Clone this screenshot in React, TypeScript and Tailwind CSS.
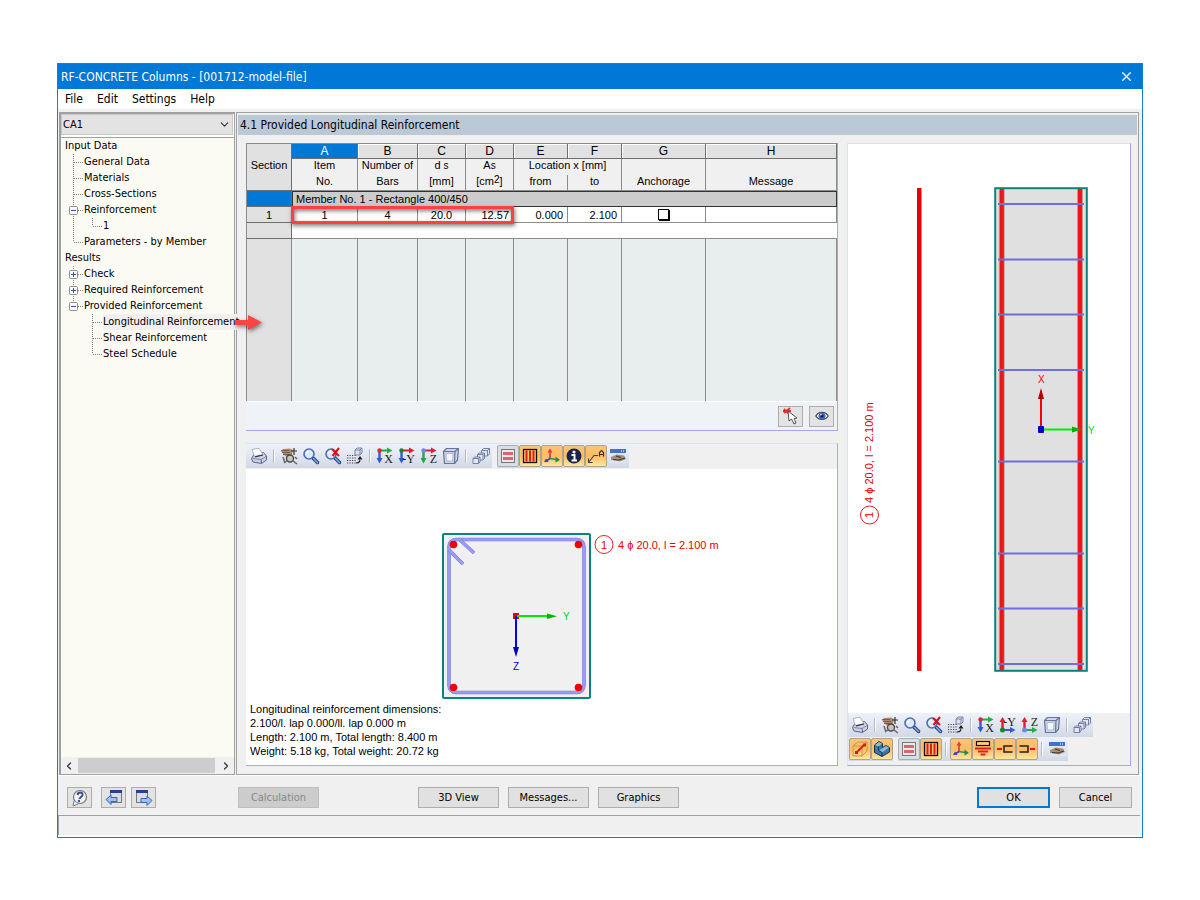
import React from "react";
import { X, ChevronDown, ChevronLeft, ChevronRight } from "lucide-react";

type Guide = "blank" | "line" | "tee" | "end" | "minus" | "plus" | "minusLast";

function TreeGuide({ kind }: { kind: Guide }) {
  const boxed = kind === "minus" || kind === "plus" || kind === "minusLast";
  const down = kind === "line" || kind === "tee" || kind === "minus" || kind === "plus";
  return (
    <svg width="19" height="16" viewBox="0 0 19 16" className="shrink-0" aria-hidden="true">
      {kind !== "blank" && (
        <path d={down ? "M8.5 0V16" : "M8.5 0V8"} stroke="#808080" strokeDasharray="1 1" fill="none" />
      )}
      {kind !== "blank" && kind !== "line" && (
        <path d="M9 8.5H18" stroke="#808080" strokeDasharray="1 1" fill="none" />
      )}
      {boxed && (
        <>
          <rect x="4.5" y="4.5" width="8" height="8" rx="1" fill="#f8f8f8" stroke="#8e8e8e" />
          <path d={kind === "plus" ? "M6 8.5H11M8.5 6V11" : "M6 8.5H11"} stroke="#3a55a0" fill="none" />
        </>
      )}
    </svg>
  );
}

const TREE: { label: string; guides: Guide[]; selected?: boolean }[] = [
  { label: "Input Data", guides: [] },
  { label: "General Data", guides: ["tee"] },
  { label: "Materials", guides: ["tee"] },
  { label: "Cross-Sections", guides: ["tee"] },
  { label: "Reinforcement", guides: ["minus"] },
  { label: "1", guides: ["line", "end"] },
  { label: "Parameters - by Member", guides: ["end"] },
  { label: "Results", guides: [] },
  { label: "Check", guides: ["plus"] },
  { label: "Required Reinforcement", guides: ["plus"] },
  { label: "Provided Reinforcement", guides: ["minusLast"] },
  { label: "Longitudinal Reinforcement", guides: ["blank", "tee"], selected: true },
  { label: "Shear Reinforcement", guides: ["blank", "tee"] },
  { label: "Steel Schedule", guides: ["blank", "end"] },
];

function Ico({ children, size = 18 }: { children: React.ReactNode; size?: number }) {
  return (
    <svg width={size} height={size} viewBox="0 0 18 18" fill="none" className="shrink-0" aria-hidden="true">
      {children}
    </svg>
  );
}

const PrinterIcon = () => (
  <Ico>
    <path d="M1.500 11.500 4 7.500 13.500 5.500 16.500 9V13L11.500 16.500 3 15Z" fill="#cdd2e4" stroke="#5d6585" />
    <path d="M2.500 11.500 11 12.500 16 9.500" stroke="#8189a8" />
    <path d="M11 12.500 11.500 16" stroke="#5d6585" />
    <path d="M4.500 9.500 2 2.500 9 1.300 13 7.500Z" fill="#fff" stroke="#9a9fae" strokeWidth=".8" />
    <path d="M5 9.800 13 8" stroke="#2e3450" strokeWidth="1.200" />
  </Ico>
);

const PanIcon = () => (
  <Ico>
    <path d="M1 4 3 2 10 1.500 13 3 12 8 7 10 4 8Z" fill="#b08a6c" />
    <path d="M1 3.500H9M2 5.500H10M3 7.500H9" stroke="#6b5140" strokeWidth=".8" />
    <path d="M14 1V8M11 4H17" stroke="#333" strokeWidth="1.200" />
    <circle cx="10" cy="11.500" r="3.500" fill="#c7c3bd" stroke="#444" strokeWidth="1.300" />
    <path d="M3 10 5 16M4 16 8 13M13 14 17 17M15 10 17 12" stroke="#666" strokeWidth="1.500" />
  </Ico>
);

const ZoomShape = () => (
  <>
    <path d="M11 11 15.500 15.500" stroke="#27407e" strokeWidth="3.500" strokeLinecap="round" />
    <path d="M11.500 11.500 15.500 15.500" stroke="#8fb3ee" strokeWidth="1.300" strokeLinecap="round" />
    <circle cx="7" cy="7" r="5" fill="#dce9fb" stroke="#4a6bb4" strokeWidth="1.600" />
    <path d="M4.500 7A2.500 2.500 0 0 1 7 4.500" stroke="#fff" strokeWidth="1.300" />
  </>
);
const ZoomIcon = () => (
  <Ico>
    <ZoomShape />
  </Ico>
);
const ZoomResetIcon = () => (
  <Ico>
    <ZoomShape />
    <path d="M8 2 15 9M15 1 8.500 9" stroke="#d41414" strokeWidth="2" />
  </Ico>
);

const GridCubeIcon = () => (
  <Ico>
    {[8.5, 11, 13.5, 16].map((y) => (
      <path key={y} d={`M1 ${y}H10`} stroke="#444" strokeWidth="1.200" strokeDasharray="1.200 1.300" />
    ))}
    <path d="M9 3 11 1H16V6L14 8H9ZM9 3H14V8M14 3 16 1" stroke="#7c86a8" fill="#dbe1f0" />
    <path d="M10 16C14 16 14 14 14 11M12 12.500 14 10 16 12.500" stroke="#222" strokeWidth="1.200" />
  </Ico>
);

function AxisIcon({ letter, across, down, hub }: { letter: string; across: string; down: string; hub: string }) {
  return (
    <Ico>
      <path d="M3 3.500H12" stroke={across} strokeWidth="2" />
      <path d="M11 .5 16.500 3.500 11 6.500Z" fill={across} />
      <path d="M3.500 4V12" stroke={down} strokeWidth="2.400" />
      <path d="M.5 11 3.500 16.500 6.500 11Z" fill={down} />
      <circle cx="3.500" cy="3.500" r="2.200" fill={hub} />
      <text x="17" y="16" textAnchor="end" fontSize="12" fontFamily="Liberation Serif, serif" fill="#222">
        {letter}
      </text>
    </Ico>
  );
}
const AxisX = () => <AxisIcon letter="X" across="#25ad40" down="#3657d8" hub="#e6252b" />;
const AxisY = () => <AxisIcon letter="-Y" across="#d92038" down="#3657d8" hub="#16852d" />;
const AxisZ = () => <AxisIcon letter="Z" across="#d92038" down="#25a53a" hub="#7088e8" />;

function UpAxisIcon({ letter, bottom, up, hub }: { letter: string; bottom: string; up: string; hub: string }) {
  return (
    <Ico>
      <path d="M3.500 14H12" stroke={bottom} strokeWidth="2" />
      <path d="M11 11 16.500 14 11 17Z" fill={bottom} />
      <path d="M3.500 14V5" stroke={up} strokeWidth="2.400" />
      <path d="M.5 6 3.500 1 6.500 6Z" fill={up} />
      <circle cx="3.500" cy="14" r="2.500" fill={hub} />
      <text x="17" y="9.500" textAnchor="end" fontSize="12" fontFamily="Liberation Serif, serif" fill="#222">
        {letter}
      </text>
    </Ico>
  );
}
const UpAxisY = () => <UpAxisIcon letter="-Y" bottom="#3657d8" up="#d92038" hub="#16852d" />;
const UpAxisZ = () => <UpAxisIcon letter="Z" bottom="#25ad40" up="#d92038" hub="#7088e8" />;

const CubeIcon = () => (
  <Ico>
    <path
      d="M1.500 4.500 4.500 1.500H16.500L15.500 13 12.500 16.500H2.500Z"
      fill="#cdd5e8"
      stroke="#66749a"
      strokeWidth="1.200"
      strokeLinejoin="round"
    />
    <path d="M1.500 4.500H13L12.500 16.500M13 4.500 16.500 1.500" stroke="#66749a" strokeWidth="1.200" />
    <path d="M4 6.500H11L10.500 14H4.500Z" fill="#f4f6fb" stroke="#a3aecb" strokeWidth=".8" />
  </Ico>
);

const CubesIcon = () => (
  <Ico>
    <g fill="#e2e7f2" stroke="#68749a" strokeWidth=".9" strokeLinejoin="round">
      <path d="M9.500 3.500 11.500 1.500H17.500V7L15.500 9H9.500Z" />
      <path d="M9.500 3.500H15.500V9M15.500 3.500 17.500 1.500" />
      <path d="M5.500 7.500 7 6H12.500V11.500L11 13H5.500Z" />
      <path d="M5.500 7.500H11V13M11 7.500 12.500 6" />
      <path d="M1 11.500 2.500 10H8V15L6.500 16.500H1Z" />
      <path d="M1 11.500H6.500V16.500M6.500 11.500 8 10" />
    </g>
  </Ico>
);

const StirrupsIcon = () => (
  <Ico>
    <rect x="2.500" y="2.500" width="13" height="13" fill="#e9e9e9" stroke="#777" />
    <rect x="4" y="5" width="10" height="3" fill="#dc6670" />
    <rect x="4" y="10" width="10" height="3" fill="#dc6670" />
  </Ico>
);
const BarsIcon = () => (
  <Ico>
    <rect x="2.500" y="2.500" width="13" height="13" fill="#ffc766" stroke="#111" strokeWidth="1.300" />
    <path d="M5.500 3.500V14.500M9 3.500V14.500M12.500 3.500V14.500" stroke="#e01a1a" strokeWidth="2" />
  </Ico>
);
const AxesIcon = () => (
  <Ico>
    <path d="M7 12V4" stroke="#d33434" strokeWidth="1.500" />
    <path d="M4.500 5.500 7 1.500 9.500 5.500Z" fill="#e23a3a" />
    <path d="M7 11.500 13 12.500" stroke="#2f8f57" strokeWidth="1.500" />
    <path d="M12.500 9.500 17 13 12.500 15.500Z" fill="#20894b" />
    <path d="M7 11.500 3 14" stroke="#3b3fc0" strokeWidth="1.500" />
    <path d="M1 15 3 11.500 5.500 15Z" fill="#3b3fc0" />
  </Ico>
);
const InfoIcon = () => (
  <Ico>
    <circle cx="9" cy="9" r="7.500" fill="#16244e" />
    <circle cx="9" cy="5" r="1.600" fill="#fff" />
    <path d="M6.500 8H9.500V13M6.500 13.500H12" stroke="#fff" strokeWidth="2" />
  </Ico>
);
const LabelIcon = () => (
  <Ico>
    <path d="M1.500 15.500 7 8.500H11M1.500 11.500V15.500H5.500" stroke="#444" strokeWidth="1.200" />
    <path d="M12.500 9.500V5.500L14.500 3.500 16.500 5.500V9.500M12.500 7.500H16.500" stroke="#333" strokeWidth="1.200" />
  </Ico>
);
const SettingsIcon = () => (
  <Ico>
    <rect x="1" y="2" width="16" height="14" fill="#dce6f5" />
    <rect x="1" y="2" width="16" height="4" fill="#3d74c9" />
    <path d="M12 4H16" stroke="#fff" strokeDasharray="1 1" />
    <path d="M2 10 8 7.500 15 8.500 17 12 11 14.500 6 13.500 2 13Z" fill="#a98d78" />
    <path d="M4 12.500 10 13 16 11M7 9 12 10.500" stroke="#3f3731" strokeWidth="1.200" />
  </Ico>
);
const WireBoxIcon = () => (
  <Ico>
    <path d="M2 6 7 2H16V11L11 16H2ZM2 6H11V16M11 6 16 2" stroke="#d09240" />
    <path d="M6 12 13 5" stroke="#d31d1d" strokeWidth="1.800" />
    <rect x="4" y="11" width="3" height="3" fill="#d31d1d" />
    <rect x="12" y="3.500" width="3" height="3" fill="#d31d1d" />
  </Ico>
);
const SolidIcon = () => (
  <Ico>
    <path d="M1.500 5 6 1.500 9.500 3.500V7.500L13 5.500 16.500 7.500V12L9 16.500 1.500 12.500Z" fill="#3c78a8" stroke="#17344e" />
    <path d="M2 5 6 2 9 3.500 5.500 6.500ZM6 10.500 13 6 16 7.500 9 12.500Z" fill="#8fbadd" />
    <path d="M9 12.500V16.500M5.500 6.500V10.500L9 12.500" stroke="#17344e" />
  </Ico>
);
const SupportIcon = () => (
  <Ico>
    <rect x="2.500" y="1.500" width="13" height="4" fill="#ffd27a" stroke="#111" strokeWidth="1.200" />
    <path d="M1 8.500H17M4 11.500H14M6.500 14.500H11.500" stroke="#d82020" strokeWidth="2" />
  </Ico>
);
const LeftHookIcon = () => (
  <Ico>
    <path d="M1 9H6" stroke="#e01a1a" strokeWidth="2" />
    <path d="M16.500 6H8V12H16.500" stroke="#222" strokeWidth="1.500" />
  </Ico>
);
const RightHookIcon = () => (
  <Ico>
    <path d="M12 9H17" stroke="#e01a1a" strokeWidth="2" />
    <path d="M1.500 6H10V12H1.500" stroke="#222" strokeWidth="1.500" />
  </Ico>
);

type Tool = { name: string; icon: () => React.ReactElement; state?: "on" | "off" };

function ToolGroup({ sets }: { sets: Tool[][] }) {
  return (
    <div className="flex h-6 items-center bg-linear-to-b from-[#eef2fa] to-[#d2d9e6]">
      {sets.map((set, i) => (
        <React.Fragment key={i}>
          {i > 0 && <span className="mx-[3px] h-3.5 w-0.5 border-r border-white bg-[#b4b8c0]" />}
          {set.map(({ name, icon: Icon, state }) => (
            <button
              key={name}
              type="button"
              title={name}
              aria-label={name}
              className={
                state === "on"
                  ? "flex size-[22px] items-center justify-center rounded-xs border border-[#a9a58f] bg-linear-to-b from-[#ffc479] via-[#ffbb61] to-[#ffe69c]"
                  : state === "off"
                    ? "flex size-[22px] items-center justify-center rounded-xs border border-[#a4b0b8] bg-[#d9dee4]"
                    : "flex size-[22px] items-center justify-center"
              }
            >
              <Icon />
            </button>
          ))}
        </React.Fragment>
      ))}
    </div>
  );
}

const BASE_TOOLS: Tool[][] = [
  [{ name: "Print", icon: PrinterIcon }],
  [
    { name: "Pan", icon: PanIcon },
    { name: "Zoom window", icon: ZoomIcon },
    { name: "Show all", icon: ZoomResetIcon },
    { name: "Previous view", icon: GridCubeIcon },
  ],
];
const COPY_TOOL: Tool[] = [{ name: "Copy", icon: CubesIcon }];

const SECTION_VIEW: Tool[][] = [
  ...BASE_TOOLS,
  [
    { name: "View in X", icon: AxisX },
    { name: "View in -Y", icon: AxisY },
    { name: "View in Z", icon: AxisZ },
    { name: "Isometric", icon: CubeIcon },
  ],
  COPY_TOOL,
];
const SECTION_DISPLAY: Tool[][] = [
  [
    { name: "Stirrups", icon: StirrupsIcon, state: "off" },
    { name: "Longitudinal bars", icon: BarsIcon, state: "on" },
    { name: "Axes", icon: AxesIcon, state: "on" },
    { name: "Information", icon: InfoIcon, state: "on" },
    { name: "Labels", icon: LabelIcon, state: "on" },
    { name: "Settings", icon: SettingsIcon },
  ],
];
const MEMBER_VIEW: Tool[][] = [
  ...BASE_TOOLS,
  [
    { name: "View in X", icon: AxisX },
    { name: "View in -Y", icon: UpAxisY },
    { name: "View in Z", icon: UpAxisZ },
    { name: "Isometric", icon: CubeIcon },
  ],
  COPY_TOOL,
];
const MEMBER_MODEL: Tool[][] = [
  [
    { name: "Wireframe", icon: WireBoxIcon, state: "on" },
    { name: "Solid", icon: SolidIcon, state: "on" },
  ],
];
const MEMBER_DISPLAY: Tool[][] = [
  [
    { name: "Stirrups", icon: StirrupsIcon, state: "off" },
    { name: "Longitudinal bars", icon: BarsIcon, state: "on" },
  ],
  [
    { name: "Axes", icon: AxesIcon, state: "on" },
    { name: "Supports", icon: SupportIcon, state: "on" },
    { name: "Left anchorage", icon: LeftHookIcon, state: "on" },
    { name: "Right anchorage", icon: RightHookIcon, state: "on" },
  ],
  [{ name: "Settings", icon: SettingsIcon }],
];

const LETTERS = ["A", "B", "C", "D", "E", "F", "G", "H"];
const UNITS: React.ReactNode[] = [
  "No.",
  "Bars",
  "[mm]",
  <>
    [cm<span className="align-[2px] text-[10px] leading-none">2</span>]
  </>,
  "from",
  "to",
  "Anchorage",
  "Message",
];

function ReinforcementTable() {
  const head = "border-r border-[#8c8c8c] p-0 text-center align-top leading-3 font-normal";
  const side = "border-r border-b border-[#6e6e6e] bg-[#e1e1e1] p-0 text-center font-normal";
  const cell = "border-r border-b border-[#8c8c8c] bg-white p-0";
  return (
    <div className="relative">
      <table className="w-full table-fixed border-separate border-spacing-0 border-t border-l border-[#8c8c8c] font-['Liberation_Sans',sans-serif] text-[11px] leading-[14px]">
        <colgroup>
          <col className="w-[45px]" />
          <col className="w-[66px]" />
          <col className="w-[60px]" />
          <col className="w-12" />
          <col className="w-12" />
          <col className="w-[54px]" />
          <col className="w-[54px]" />
          <col className="w-[84px]" />
          <col />
        </colgroup>
        <thead className="bg-[#f0f0f0]">
          <tr>
            <th
              rowSpan={3}
              scope="col"
              className="border-r border-b border-[#6e6e6e] bg-[#e1e1e1] p-0 pt-3.5 text-center align-top font-normal"
            >
              Section
            </th>
            {LETTERS.map((l) => (
              <th
                key={l}
                className={
                  l === "A"
                    ? "h-[15px] border-r border-b border-[#6e6e6e] bg-[#0078d7] p-0 text-center text-xs leading-[14px] font-normal text-white"
                    : "h-[15px] border-r border-b border-[#6e6e6e] bg-[#e1e1e1] p-0 text-center text-xs leading-[14px] font-normal shadow-[inset_1px_1px_0_#fff]"
                }
              >
                {l}
              </th>
            ))}
          </tr>
          <tr className="h-4">
            <th className={head}>Item</th>
            <th className={head}>Number of</th>
            <th className={head}>
              d <span className="text-[10px] leading-none">s</span>
            </th>
            <th className={head}>
              A<span className="text-[10px] leading-none">s</span>
            </th>
            <th colSpan={2} className={head}>
              Location x [mm]
            </th>
            <th className={head} />
            <th className={head} />
          </tr>
          <tr className="h-4">
            {UNITS.map((t, i) => (
              <th
                key={i}
                className="h-4 border-r border-b border-[#8c8c8c] p-0 text-center align-top leading-3 font-normal"
              >
                {t}
              </th>
            ))}
          </tr>
        </thead>
        <tbody>
          <tr className="h-4">
            <th className="border-r border-b border-[#6e6e6e] bg-[#0078d7] p-0" />
            <td colSpan={8} className="border border-[#333] bg-[#ccc] p-0 pl-[3px] whitespace-nowrap">
              Member No. 1 - Rectangle 400/450
            </td>
          </tr>
          <tr className="h-4">
            <th scope="row" className={side}>
              1
            </th>
            <td className={`${cell} text-center`}>1</td>
            <td className={`${cell} text-center`}>4</td>
            <td className={`${cell} text-center`}>20.0</td>
            <td className={`${cell} pr-1 text-right`}>12.57</td>
            <td className={`${cell} pr-1 text-right`}>0.000</td>
            <td className={`${cell} pr-1 text-right`}>2.100</td>
            <td className={`${cell} text-center`}>
              <input
                type="checkbox"
                aria-label="Anchorage"
                className="mx-auto block size-[11px] appearance-none border border-black bg-white shadow-[1px_1px_0_#000]"
              />
            </td>
            <td className={cell} />
          </tr>
          <tr className="h-4">
            <th className={side} />
            <td colSpan={8} className="border-b border-[#8c8c8c] bg-white p-0" />
          </tr>
          <tr className="h-[162px]">
            <th className="border-r border-[#8c8c8c] bg-[#e1e1e1] p-0" />
            {LETTERS.map((l) => (
              <td key={l} className="border-r border-[#8c8c8c] bg-[#e8eeee] p-0" />
            ))}
          </tr>
        </tbody>
      </table>
      <div className="pointer-events-none absolute top-[63px] left-[45px] h-[18px] w-[223px] border-3 border-[#fb4141] shadow-[1px_2px_4px_rgba(0,0,0,.5),inset_1px_2px_4px_rgba(0,0,0,.5)]" />
    </div>
  );
}

function SectionDrawing() {
  return (
    <svg viewBox="246 469 591 233" className="h-[233px] w-full font-['Liberation_Sans',sans-serif]" fontSize="11">
      <rect x="443" y="534" width="147" height="164" rx="1" fill="#f0f0f0" stroke="#0b827c" strokeWidth="2" />
      <rect x="449" y="539.500" width="135" height="153" rx="7" fill="none" stroke="#7878c0" strokeWidth="3.500" />
      <rect x="449" y="539.500" width="135" height="153" rx="7" fill="none" stroke="#9a9aff" strokeWidth="2.500" />
      <path d="M449 550 463 564M460 540 474 553" stroke="#7878c0" strokeWidth="3.500" />
      <path d="M449 550 463 564M460 540 474 553" stroke="#9a9aff" strokeWidth="2.500" />
      <g fill="#f50000">
        <circle cx="453.500" cy="544.500" r="3.800" />
        <circle cx="578.500" cy="544.500" r="3.800" />
        <circle cx="453.500" cy="687.500" r="3.800" />
        <circle cx="578.500" cy="687.500" r="3.800" />
      </g>
      <rect x="513" y="613" width="6" height="6" fill="#e00000" />
      <path d="M516 616V649" stroke="#00f" strokeWidth="2" />
      <path d="M513 647H519L516 657Z" fill="#0000c8" />
      <path d="M517 616H548" stroke="#0e0" strokeWidth="2" />
      <path d="M547 613.500V619L557 616.200Z" fill="#00b400" />
      <text x="563" y="620" fontSize="10" fill="#00d800">Y</text>
      <text x="513" y="670" fontSize="10" fill="#00e">Z</text>
      <circle cx="604" cy="544.500" r="9" fill="#fff" stroke="#f01818" />
      <g fill="#e80000">
        <text x="601" y="548.500">1</text>
        <text x="618" y="548.500">4 ϕ 20.0, l = 2.100 m</text>
      </g>
    </svg>
  );
}

function MemberDrawing() {
  return (
    <svg viewBox="848 144 282 569" className="h-[569px] w-full font-['Liberation_Sans',sans-serif]" fontSize="11">
      <rect x="917" y="188" width="4.500" height="483" fill="#e80000" />
      <rect x="995.200" y="188.200" width="91.600" height="482.600" fill="#e0e0e0" stroke="#0b827c" strokeWidth="2" />
      <path d="M1001.800 189V670M1080 189V670" stroke="#c79a9a" strokeWidth="6" />
      <path d="M1001.800 189V670M1080 189V670" stroke="#ee1515" strokeWidth="4" />
      {[204, 259.5, 314.5, 370, 461.5, 553.5, 608.5, 664].map((y) => (
        <path key={y} d={`M998 ${y}H1084`} stroke="#6f6fd8" strokeWidth="2" />
      ))}
      <path d="M1041 429V398" stroke="#f00" strokeWidth="2" />
      <path d="M1038 399H1044L1041 388Z" fill="#b40000" />
      <path d="M1041 429.500H1073" stroke="#0e0" strokeWidth="2" />
      <path d="M1072 426.500V432.500L1082 429.500Z" fill="#00b400" />
      <rect x="1038" y="426" width="6" height="7" rx="1" fill="#0000c8" />
      <text x="1038" y="383" fontSize="10" fill="#f00">X</text>
      <text x="1088" y="433.500" fontSize="10" fill="#0d0">Y</text>
      <circle cx="869.500" cy="515" r="9" fill="#fff" stroke="#f01818" />
      <g fill="#e80000" transform="translate(873 518) rotate(-90)">
        <text x="0" y="0">1</text>
        <text x="15" y="0">4 ϕ 20.0, l = 2.100 m</text>
      </g>
    </svg>
  );
}

const squareButton = "flex h-[21px] w-[25px] items-center justify-center border border-[#adadad] bg-[#e3e3e3]";
const pushButton = "h-[21px] w-[81px] border border-[#adadad] bg-[#e1e1e1] text-center";

export default function App() {
  return (
    <div className="min-h-screen bg-white px-[57px] pt-[63px] font-['DejaVu_Sans_Condensed','DejaVu_Sans',sans-serif] text-[11px] leading-4 text-black">
      <div className="border border-[#0f7fd7] bg-[#f0f0f0]">
        <header className="flex h-[25px] items-center justify-between bg-[#0078d7] pr-2 pl-[3px] text-white">
          <h1 className="text-xs whitespace-nowrap">RF-CONCRETE Columns - [001712-model-file]</h1>
          <button type="button" aria-label="Close">
            <X size={15} strokeWidth={2} />
          </button>
        </header>
        <nav className="flex h-5 items-center bg-white pl-[7px] text-xs">
          <button type="button" className="mr-3.5">File</button>
          <button type="button" className="mr-3.5">Edit</button>
          <button type="button" className="mr-3.5">Settings</button>
          <button type="button">Help</button>
        </nav>

        <div className="mt-[3px] flex gap-px border-b border-white pr-[3px] pl-px">
          <aside className="flex w-[176px] shrink-0 flex-col border-2 border-r border-b border-[#a0a0a0] bg-white">
            <div className="relative mb-0.5 border-r border-white">
              <select
                aria-label="Case"
                className="block h-[21px] w-full appearance-none border border-[#c8c8c8] bg-[#e3e3e3] pl-px text-[11px]"
              >
                <option>CA1</option>
              </select>
              <ChevronDown size={13} className="pointer-events-none absolute top-1 right-0.5 text-[#333]" />
            </div>
            <ul className="grow border-t border-[#a0a0a0] bg-[#fcfbf3]">
              {TREE.map(({ label, guides, selected }) => (
                <li key={label} className="relative flex h-4 items-center pl-1">
                  {guides.map((g, i) => (
                    <TreeGuide key={i} kind={g} />
                  ))}
                  <a href="#" className={selected ? "grow bg-[#f0f0f0] whitespace-nowrap" : "whitespace-nowrap"}>
                    {label}
                  </a>
                  {selected && (
                    <svg
                      width="32"
                      height="24"
                      viewBox="0 0 32 24"
                      className="absolute -top-1 left-[173px] z-10 drop-shadow-[1px_2px_2px_rgba(0,0,0,.5)]"
                      aria-hidden="true"
                    >
                      <path d="M1 10H14V5L28 12.500 14 20V15H1Z" fill="#fb4545" />
                    </svg>
                  )}
                </li>
              ))}
            </ul>
            <div className="flex h-[17px] items-center justify-between bg-[#f0f0f0] px-0.5 text-[#333]">
              <ChevronLeft size={12} strokeWidth={2.5} />
              <div className="mr-[5px] ml-[3px] h-[15px] grow bg-[#cdcdcd]" />
              <ChevronRight size={12} strokeWidth={2.5} />
            </div>
          </aside>

          <main className="min-w-0 grow border border-[#a0a0a0] px-px pt-0.5 pb-2">
            <h2 className="flex h-5 items-center bg-[#bbc9d7] pl-0.5 text-xs">
              4.1 Provided Longitudinal Reinforcement
            </h2>
            <div className="mt-2 flex gap-[9px] pr-1.5 pl-2">
              <div className="flex min-w-0 grow flex-col gap-3">
                <section className="border-r border-b border-[#a6a6ee] bg-[#eff3f8]">
                  <ReinforcementTable />
                  <div className="flex h-[29px] items-center justify-end gap-1.5 border-t border-white pr-[3px]">
                    <button type="button" aria-label="Pick" className={squareButton}>
                      <Ico>
                        <path d="M2 2 8 8M8 1 2 6M1 4H9" stroke="#dc3030" strokeWidth="1.800" />
                        <path d="M6 4 7 14 9.500 12 12 17 14 16 12 11.500 15 11Z" fill="#fff" stroke="#555" />
                      </Ico>
                    </button>
                    <button type="button" aria-label="Show" className={squareButton}>
                      <Ico size={16}>
                        <path d="M2 9C5 3.500 13 3.500 16 9 13 14 5 14 2 9Z" fill="#fff" stroke="#444" strokeWidth="1.300" />
                        <circle cx="9" cy="9" r="4" fill="#4168d0" />
                        <circle cx="9" cy="9" r="1.800" fill="#111a40" />
                        <circle cx="7.800" cy="7.500" r=".9" fill="#fff" />
                      </Ico>
                    </button>
                  </div>
                </section>

                <section className="grow border-t border-r border-b border-t-[#dbe3f4] border-r-[#a6a6ee] border-b-[#a6a6ee] bg-white">
                  <div className="flex h-[25px] gap-[5px] bg-[#f0f0f0]">
                    <div className="flex h-6 bg-linear-to-b from-[#eef2fa] to-[#d2d9e6] pl-0.5">
                      <ToolGroup sets={SECTION_VIEW} />
                    </div>
                    <ToolGroup sets={SECTION_DISPLAY} />
                  </div>
                  <SectionDrawing />
                  <p className="h-[63px] pl-1 font-['Liberation_Sans',sans-serif] leading-[14px]">
                    Longitudinal reinforcement dimensions:
                    <br />
                    2.100/l. lap 0.000/ll. lap 0.000 m
                    <br />
                    Length: 2.100 m, Total length: 8.400 m
                    <br />
                    Weight: 5.18 kg, Total weight: 20.72 kg
                  </p>
                </section>
              </div>

              <section className="w-[284px] shrink-0 border border-t-[#dbe3f4] border-r-[#a6a6ee] border-b-[#a6a6ee] border-l-[#dbe3f4] bg-white">
                <MemberDrawing />
                <div className="flex flex-col bg-[#f0f0f0] pb-1">
                  <div className="flex">
                    <div className="bg-[#e0e5ef] pl-px">
                      <ToolGroup sets={MEMBER_VIEW} />
                    </div>
                  </div>
                  <div className="flex gap-[5px]">
                    <div className="bg-[#e0e5ef] pl-px">
                      <ToolGroup sets={MEMBER_MODEL} />
                    </div>
                    <ToolGroup sets={MEMBER_DISPLAY} />
                  </div>
                </div>
              </section>
            </div>
          </main>
        </div>

        <footer>
          <div className="flex h-[39px] items-center gap-[9px] pt-1 pr-2.5 pl-[9px]">
            <button type="button" aria-label="Help" className={squareButton}>
              <Ico>
                <circle cx="9" cy="8" r="6.500" fill="#f5f5f5" stroke="#777" strokeWidth="1.200" />
                <path d="M3 12 2 17 7 15" fill="#f5f5f5" stroke="#777" />
                <path d="M6.500 6C7 2.500 12 3 11.500 6 11 8 9 8 8.500 10" stroke="#34518f" strokeWidth="2" />
                <circle cx="8" cy="12" r="1.200" fill="#34518f" />
              </Ico>
            </button>
            <div className="flex gap-[5px]">
              <button type="button" aria-label="Previous table" className={squareButton}>
                <Ico>
                  <rect x="5.500" y="1.500" width="11" height="12" fill="#dcdcdc" stroke="#777" />
                  <rect x="5" y="1" width="12" height="3" fill="#27408b" />
                  <path d="M1 10.500 6 6V8.500H12V12.500H6V15.500Z" fill="#9cc2f2" stroke="#3765bb" />
                </Ico>
              </button>
              <button type="button" aria-label="Next table" className={squareButton}>
                <Ico>
                  <rect x="1.500" y="1.500" width="11" height="12" fill="#dcdcdc" stroke="#777" />
                  <rect x="1" y="1" width="12" height="3" fill="#27408b" />
                  <path d="M17 11.500 12 7V9.500H6V13.500H12V16.500Z" fill="#9cc2f2" stroke="#3765bb" />
                </Ico>
              </button>
            </div>
            <div className="ml-[73px] flex grow gap-[9px]">
              <button
                type="button"
                disabled
                className="mr-[90px] h-[21px] w-[81px] border border-[#bfbfbf] bg-[#ccc] text-[#888]"
              >
                Calculation
              </button>
              <button type="button" className={pushButton}>3D View</button>
              <button type="button" className={pushButton}>Messages...</button>
              <button type="button" className={pushButton}>Graphics</button>
            </div>
            <button type="button" className="h-[21px] w-[73px] border-2 border-[#0078d7] bg-[#e1e1e1]">OK</button>
            <button type="button" className="h-[21px] w-[73px] border border-[#adadad] bg-[#e1e1e1]">Cancel</button>
          </div>
          <div className="mr-0.5 h-5 border-t border-l border-[#a0a0a0]" />
          <div className="h-0.5 bg-[#fafafa]" />
        </footer>
      </div>
    </div>
  );
}
